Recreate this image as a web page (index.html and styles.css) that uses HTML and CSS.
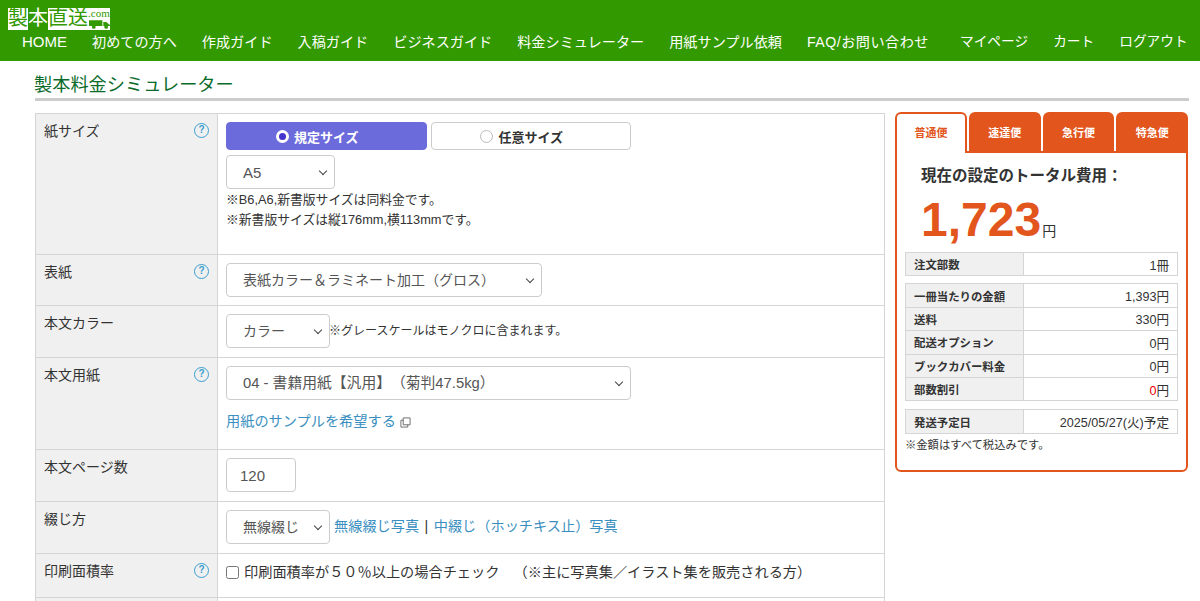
FILE: index.html
```html
<!DOCTYPE html>
<html lang="ja">
<head>
    <meta charset="UTF-8">
    <meta name="viewport" content="width=device-width, initial-scale=1.0">
    <title>製本料金シミュレーター</title>
    <link rel="stylesheet" href="styles.css">
</head>
<body>
    <header class="site-header">
        <div class="logo">
            <span class="logo-kanji logo-white">製</span>
            <span class="logo-kanji logo-green">本</span>
            <div class="logo-white logo-wide">
                <span class="logo-kanji">直</span>
                <span class="logo-kanji">送</span>
                <div class="logo-side">
                    <span class="logo-com">.com</span>
                    <svg class="logo-truck" viewBox="0 0 22 9" aria-hidden="true">
                        <path d="M0 0h14v6H0zM15 2h3l4 3v1h-7z" fill="#339900"/>
                        <circle cx="5" cy="7" r="2" fill="#339900"/>
                        <circle cx="18" cy="7" r="2" fill="#339900"/>
                    </svg>
                </div>
            </div>
        </div>
        <nav class="main-nav">
            <a href="#" class="nav-home">HOME</a>
            <a href="#">初めての方へ</a>
            <a href="#">作成ガイド</a>
            <a href="#">入稿ガイド</a>
            <a href="#">ビジネスガイド</a>
            <a href="#">料金シミュレーター</a>
            <a href="#">用紙サンプル依頼</a>
            <a href="#" class="nav-faq">FAQ/お問い合わせ</a>
            <a href="#" class="nav-account nav-gap">マイページ</a>
            <a href="#" class="nav-account">カート</a>
            <a href="#" class="nav-account">ログアウト</a>
        </nav>
    </header>

    <main class="page">
        <h1 class="page-title">製本料金シミュレーター</h1>
        <div class="columns">
            <table class="form-table">
                <tr class="row-size">
                    <th><div class="th-inner">紙サイズ <span class="help">?</span></div></th>
                    <td>
                        <div class="size-toggle">
                            <div class="size-btn active"><span class="radio"></span>規定サイズ</div>
                            <div class="size-btn"><span class="radio"></span>任意サイズ</div>
                        </div>
                        <div class="select select-a5"><select><option>A5</option></select></div>
                        <p class="note">※B6,A6,新書版サイズは同料金です。</p>
                        <p class="note">※新書版サイズは縦176mm,横113mmです。</p>
                    </td>
                </tr>
                <tr class="row-cover">
                    <th><div class="th-inner">表紙 <span class="help">?</span></div></th>
                    <td><div class="select select-cover"><select><option>表紙カラー＆ラミネート加工（グロス）</option></select></div></td>
                </tr>
                <tr class="row-color">
                    <th><div class="th-inner">本文カラー</div></th>
                    <td><div class="select select-color"><select><option>カラー</option></select></div><span class="small">※グレースケールはモノクロに含まれます。</span></td>
                </tr>
                <tr class="row-paper">
                    <th><div class="th-inner">本文用紙 <span class="help">?</span></div></th>
                    <td>
                        <div class="select select-paper"><select><option>04 - 書籍用紙【汎用】（菊判47.5kg）</option></select></div>
                        <p class="sample-link"><a href="#">用紙のサンプルを希望する</a>
                            <svg class="ext-icon" viewBox="0 0 12 12" aria-hidden="true">
                                <path d="M3.500 1h7.500v7.500H3.500zM3.500 3.500H1V11h7.500V8.500" fill="none" stroke="#666" stroke-width="1"/>
                            </svg>
                        </p>
                    </td>
                </tr>
                <tr class="row-pages">
                    <th><div class="th-inner">本文ページ数</div></th>
                    <td><input class="num-input" type="text" value="120"></td>
                </tr>
                <tr class="row-bind">
                    <th><div class="th-inner">綴じ方</div></th>
                    <td><div class="select select-bind"><select><option>無線綴じ</option></select></div><span class="bind-links"><a href="#">無線綴じ写真</a> | <a href="#">中綴じ（ホッチキス止）写真</a></span></td>
                </tr>
                <tr class="row-area">
                    <th><div class="th-inner">印刷面積率 <span class="help">?</span></div></th>
                    <td><label class="check"><input type="checkbox">印刷面積率が５０％以上の場合チェック　（※主に写真集／イラスト集を販売される方）</label></td>
                </tr>
                <tr class="row-next">
                    <th></th>
                    <td></td>
                </tr>
            </table>

            <aside class="summary">
                <div class="tabs">
                    <div class="tab active">普通便</div>
                    <div class="tab">速達便</div>
                    <div class="tab">急行便</div>
                    <div class="tab">特急便</div>
                </div>
                <div class="summary-body">
                    <h2 class="total-label">現在の設定のトータル費用：</h2>
                    <div class="total-price">1,723<span class="yen">円</span></div>
                    <table class="cost-table">
                        <tr><th>注文部数</th><td>1冊</td></tr>
                    </table>
                    <table class="cost-table">
                        <tr><th>一冊当たりの金額</th><td>1,393円</td></tr>
                        <tr><th>送料</th><td>330円</td></tr>
                        <tr><th>配送オプション</th><td>0円</td></tr>
                        <tr><th>ブックカバー料金</th><td>0円</td></tr>
                        <tr><th>部数割引</th><td><span class="red">0</span>円</td></tr>
                    </table>
                    <table class="cost-table">
                        <tr><th>発送予定日</th><td>2025/05/27(火)予定</td></tr>
                    </table>
                    <p class="tax-note">※金額はすべて税込みです。</p>
                </div>
            </aside>
        </div>
    </main>
</body>
</html>
```

FILE: styles.css
```css
* {
    box-sizing: border-box;
}
html, body {
    height: 601px;
    overflow: hidden;
}
body {
    margin: 0;
    background-color: #fff;
    color: #333;
    font-family: "Liberation Sans", "Noto Sans CJK JP", sans-serif;
    font-size: 14px;
    text-spacing-trim: space-all;
}
a {
    color: #3a8fc0;
    text-decoration: none;
}
p {
    margin: 0;
}

/* header */
.site-header {
    height: 61px;
    background-color: #339900;
    padding-top: 8px;
}
.logo {
    display: flex;
    width: 101px;
    height: 22px;
    margin-left: 8px;
    font-size: 20px;
    line-height: 21px;
}
.logo-kanji {
    display: block;
    width: 20px;
    text-align: center;
}
.logo-white {
    background-color: #fff;
    color: #339900;
}
.logo-green {
    color: #fff;
}
.logo-wide {
    display: flex;
    flex: 1;
}
.logo-side {
    display: flex;
    flex: 1;
    flex-direction: column;
    align-items: flex-end;
}
.logo-com {
    font-family: "Liberation Serif", serif;
    font-size: 11px;
    line-height: 11px;
}
.logo-truck {
    width: 21px;
    height: 9px;
    margin-top: 1px;
}
.main-nav {
    display: flex;
    margin-top: 1px;
    padding-left: 22px;
    gap: 25px;
    font-size: 14.150px;
    line-height: 22px;
}
.main-nav a {
    color: #fff;
    white-space: nowrap;
}
.main-nav .nav-home {
    font-size: 15px;
}
.main-nav .nav-faq {
    letter-spacing: 0.500px;
}
.main-nav .nav-account {
    font-size: 13.700px;
}
.main-nav .nav-gap {
    margin-left: 6px;
}

/* page */
.page {
    padding: 0 11px 0 35px;
}
.page-title {
    width: 1154px;
    height: 29px;
    margin: 11px 0;
    border-bottom: 3px solid #ccc;
    color: #0b6b2a;
    font-size: 18.200px;
    font-weight: normal;
    line-height: 26px;
    text-indent: -1px;
}
.columns {
    display: flex;
    align-items: flex-start;
    gap: 10px;
}

/* form table */
.form-table {
    width: 850px;
    flex: none;
    margin-top: 1px;
    border-collapse: collapse;
    table-layout: fixed;
}
.form-table th,
.form-table td {
    border: 1px solid #d5d5d5;
    vertical-align: top;
}
.form-table th {
    width: 182px;
    background-color: #f0f0f0;
    padding: 7px 8px 0;
    font-weight: normal;
    text-align: left;
    line-height: 20px;
}
.form-table td {
    padding: 8px 8px 0;
}
.th-inner {
    display: flex;
    justify-content: space-between;
}
.help {
    width: 15px;
    height: 15px;
    margin-top: 2px;
    border: 1.500px solid #3a9fd0;
    border-radius: 50%;
    color: #3a9fd0;
    font-size: 10px;
    font-weight: bold;
    line-height: 12px;
    text-align: center;
}
.row-size { height: 141px; }
.row-cover { height: 51px; }
.row-color { height: 52px; }
.row-paper { height: 92px; }
.row-pages { height: 52px; }
.row-bind { height: 52px; }
.row-area { height: 44px; }
.row-next { height: 60px; }

.size-toggle {
    display: flex;
    gap: 4px;
}
.size-btn {
    display: flex;
    align-items: center;
    justify-content: center;
    gap: 5px;
    width: 200.500px;
    height: 28px;
    padding-right: 18px;
    border: 1px solid #ccc;
    border-radius: 4px;
    font-size: 13px;
    font-weight: bold;
}
.size-btn.active {
    border-color: #6c6bdc;
    background-color: #6c6bdc;
    color: #fff;
}
.radio {
    width: 13px;
    height: 13px;
    border: 1px solid #bbb;
    border-radius: 50%;
    background-color: #fff;
}
.size-btn.active .radio {
    border: 3px solid #fff;
    background-color: #4433cc;
}

/* selects */
.select {
    position: relative;
    display: inline-block;
    vertical-align: middle;
}
.select::after {
    content: "";
    position: absolute;
    top: 13px;
    right: 9px;
    width: 5px;
    height: 5px;
    border-right: 1px solid #444;
    border-bottom: 1px solid #444;
    transform: rotate(45deg);
    pointer-events: none;
}
.select select {
    display: block;
    width: 100%;
    height: 34px;
    padding: 0 16px;
    border: 1px solid #ccc;
    border-radius: 4px;
    background-color: #fff;
    color: #555;
    font-family: inherit;
    font-size: 14px;
    appearance: none;
}
.select-a5 {
    display: block;
    width: 109px;
    margin-top: 5px;
}
.select-a5 select {
    font-size: 15px;
}
.select-cover { width: 316px; }
.select-color { width: 104px; }
.select-paper { width: 405px; }
.select-paper select { font-size: 14.800px; }
.select-bind { width: 104px; }
.note {
    font-size: 12.800px;
    line-height: 20px;
}
.select-a5 + .note {
    margin-top: 1px;
}
.small {
    margin-left: -1px;
    font-size: 12px;
}
.sample-link {
    margin-top: 11px;
    font-size: 14.200px;
    line-height: 20px;
}
.ext-icon {
    width: 11px;
    height: 11px;
    vertical-align: -2px;
}
.num-input {
    display: block;
    width: 70px;
    height: 34px;
    padding: 0 13px;
    border: 1px solid #ccc;
    border-radius: 4px;
    color: #555;
    font-family: inherit;
    font-size: 15px;
}
.bind-links {
    margin-left: 4px;
    font-size: 14.200px;
    word-spacing: 1.500px;
}
.check {
    display: flex;
    align-items: center;
    gap: 5px;
    font-size: 14.200px;
    line-height: 20px;
    white-space: nowrap;
}
.check input {
    width: 13px;
    height: 13px;
    margin: 0;
}

/* summary box */
.summary {
    width: 293px;
    flex: none;
}
.tabs {
    display: flex;
    gap: 2px;
    height: 39px;
}
.tab {
    flex: 1;
    border-radius: 6px 6px 0 0;
    background-color: #e2551c;
    color: #fff;
    font-size: 11px;
    font-weight: bold;
    line-height: 43px;
    text-align: center;
}
.tab.active {
    position: relative;
    z-index: 1;
    flex: none;
    width: 72px;
    height: 41px;
    margin-bottom: -2px;
    border: 2px solid #e2551c;
    border-bottom: none;
    background-color: #fff;
    color: #e2551c;
    line-height: 39px;
}
.summary-body {
    height: 321px;
    padding: 12px 8px 0;
    border: 2px solid #e2551c;
    border-radius: 0 0 6px 6px;
}
.total-label {
    margin: 0 0 0 16px;
    font-size: 15.500px;
    font-weight: bold;
    line-height: 22px;
}
.total-price {
    margin: 8px 0 -4px 16px;
    color: #e2551c;
    font-size: 48px;
    font-weight: bold;
    line-height: 50px;
}
.yen {
    margin-left: 1px;
    color: #333;
    font-size: 14px;
    font-weight: normal;
}
.cost-table {
    width: 100%;
    margin-bottom: 8px;
    border-collapse: collapse;
    table-layout: fixed;
    font-size: 12.600px;
}
.total-price + .cost-table {
    margin-bottom: 7px;
}
.cost-table th,
.cost-table td {
    height: 23.400px;
    padding: 0 8px;
    border: 1px solid #d5d5d5;
}
.cost-table th {
    width: 118px;
    background-color: #f0f0f0;
    color: #333;
    font-size: 11.400px;
    text-align: left;
}
.cost-table td {
    text-align: right;
}
.red {
    color: #e00;
}
.tax-note {
    margin-top: -6px;
    font-size: 11.300px;
    line-height: 18px;
}
```
